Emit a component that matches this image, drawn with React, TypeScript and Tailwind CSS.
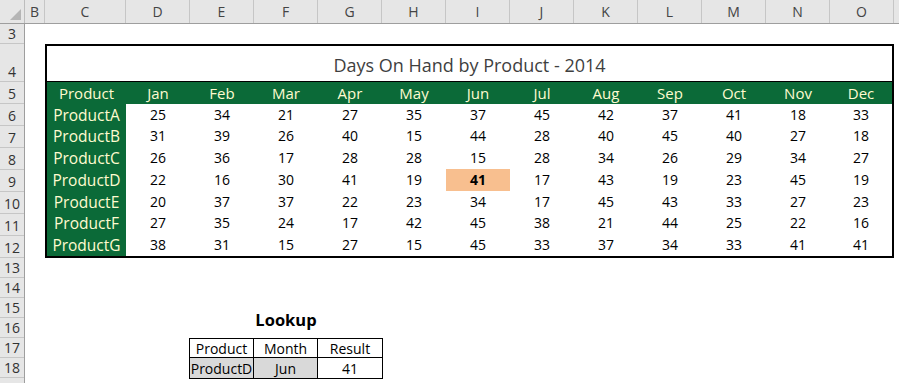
import React from "react";

const months = ["Jan","Feb","Mar","Apr","May","Jun","Jul","Aug","Sep","Oct","Nov","Dec"];
const data: [string, number[]][] = [
  ["ProductA", [25,34,21,27,35,37,45,42,37,41,18,33]],
  ["ProductB", [31,39,26,40,15,44,28,40,45,40,27,18]],
  ["ProductC", [26,36,17,28,28,15,28,34,26,29,34,27]],
  ["ProductD", [22,16,30,41,19,41,17,43,19,23,45,19]],
  ["ProductE", [20,37,37,22,23,34,17,45,43,33,27,23]],
  ["ProductF", [27,35,24,17,42,45,38,21,44,25,22,16]],
  ["ProductG", [38,31,15,27,15,45,33,37,34,33,41,41]],
];
const colLetters = ["D","E","F","G","H","I","J","K","L","M","N","O"];
const rowHeights: [string, number][] = [
  ["3",20],["4",38],["5",22],["6",22],["7",22],["8",22],["9",22],["10",22],["11",22],["12",22],
  ["13",20],["14",20],["15",20],["16",20],["17",20],["18",20],["",20],
];

export default function App() {
  const font = { fontFamily: '"Open Sans", "Liberation Sans", sans-serif' };
  return (
    <div className="w-[899px] h-[383px] overflow-hidden bg-white text-[14px] text-black" style={font}>
      {/* Column headers */}
      <div className="flex h-[24px] bg-[#e6e6e6] border-b border-[#9e9e9e] text-[#444] text-[14px]">
        <div className="w-[25px] shrink-0 border-r border-[#bdbdbd] relative flex items-end justify-end pr-[3px] pb-[3px]">
          <svg width="11" height="11" viewBox="0 0 11 11"><polygon points="11,0 11,11 0,11" fill="#b5b5b5" /></svg>
        </div>
        <div className="w-[20px] shrink-0 border-r border-[#c6c6c6] flex items-center justify-center">B</div>
        <div className="w-[81px] shrink-0 border-r border-[#c6c6c6] flex items-center justify-center">C</div>
        {colLetters.map((c) => (
          <div key={c} className="w-[64px] shrink-0 border-r border-[#c6c6c6] flex items-center justify-center">{c}</div>
        ))}
        <div className="flex-1" />
      </div>

      <div className="flex">
        {/* Row headers */}
        <div className="w-[25px] shrink-0 bg-[#e6e6e6] border-r border-[#9e9e9e] flex flex-col text-[#333] text-[14px]">
          {rowHeights.map(([n, h], i) => (
            <div key={i} className="border-b border-[#c6c6c6] flex items-end justify-center leading-[19px]" style={{ height: h }}>
              {n}
            </div>
          ))}
        </div>

        {/* Sheet body */}
        <div className="flex-1 flex flex-col">
          <div className="h-[20px]" />
          {/* Main table */}
          <div className="ml-[20px] w-[849px] h-[214px] border-2 border-black flex flex-col">
            <div className="h-[36px] shrink-0 border-b border-black flex items-center justify-center text-[18px] text-[#3f3f3f] pt-[4px]">
              Days On Hand by Product - 2014
            </div>
            <div className="flex-1 min-h-0 grid grid-cols-[79px_repeat(11,64px)_1fr] grid-rows-[repeat(8,minmax(0,1fr))] leading-[20px]">
              <div className="bg-[#0b6a38] text-[#fffbd0] text-[15px] flex items-center justify-center">Product</div>
              {months.map((m) => (
                <div key={m} className="bg-[#0b6a38] text-[#fffbd0] text-[15px] flex items-center justify-center">{m}</div>
              ))}
              {data.map(([p, vals]) => (
                <React.Fragment key={p}>
                  <div className="bg-[#0b6a38] text-[#fffbd0] text-[15.5px] flex items-center justify-center">{p}</div>
                  {vals.map((v, i) => {
                    const hi = p === "ProductD" && i === 5;
                    return (
                      <div
                        key={i}
                        className={hi ? "bg-[#f8bf8f] font-bold flex items-center justify-center" : "flex items-center justify-center"}
                      >
                        {v}
                      </div>
                    );
                  })}
                </React.Fragment>
              ))}
            </div>
          </div>
          <div className="h-[52px]" />
          {/* Lookup */}
          <div className="ml-[229px] w-[64px] h-[20px] flex items-center justify-center font-bold text-[16.5px]">
            Lookup
          </div>
          <div className="h-[8px]" />
          <div className="ml-[164px] w-[194px] border border-black grid grid-cols-[64px_64px_64px] grid-rows-[19px_20px] text-[14px]">
            <div className="border-r border-b border-black flex items-center justify-center">Product</div>
            <div className="border-r border-b border-black flex items-center justify-center">Month</div>
            <div className="border-b border-black flex items-center justify-center">Result</div>
            <div className="border-r border-black bg-[#d9d9d9] flex items-center justify-center">ProductD</div>
            <div className="border-r border-black bg-[#d9d9d9] flex items-center justify-center">Jun</div>
            <div className="flex items-center justify-center">41</div>
          </div>
        </div>
      </div>
    </div>
  );
}
